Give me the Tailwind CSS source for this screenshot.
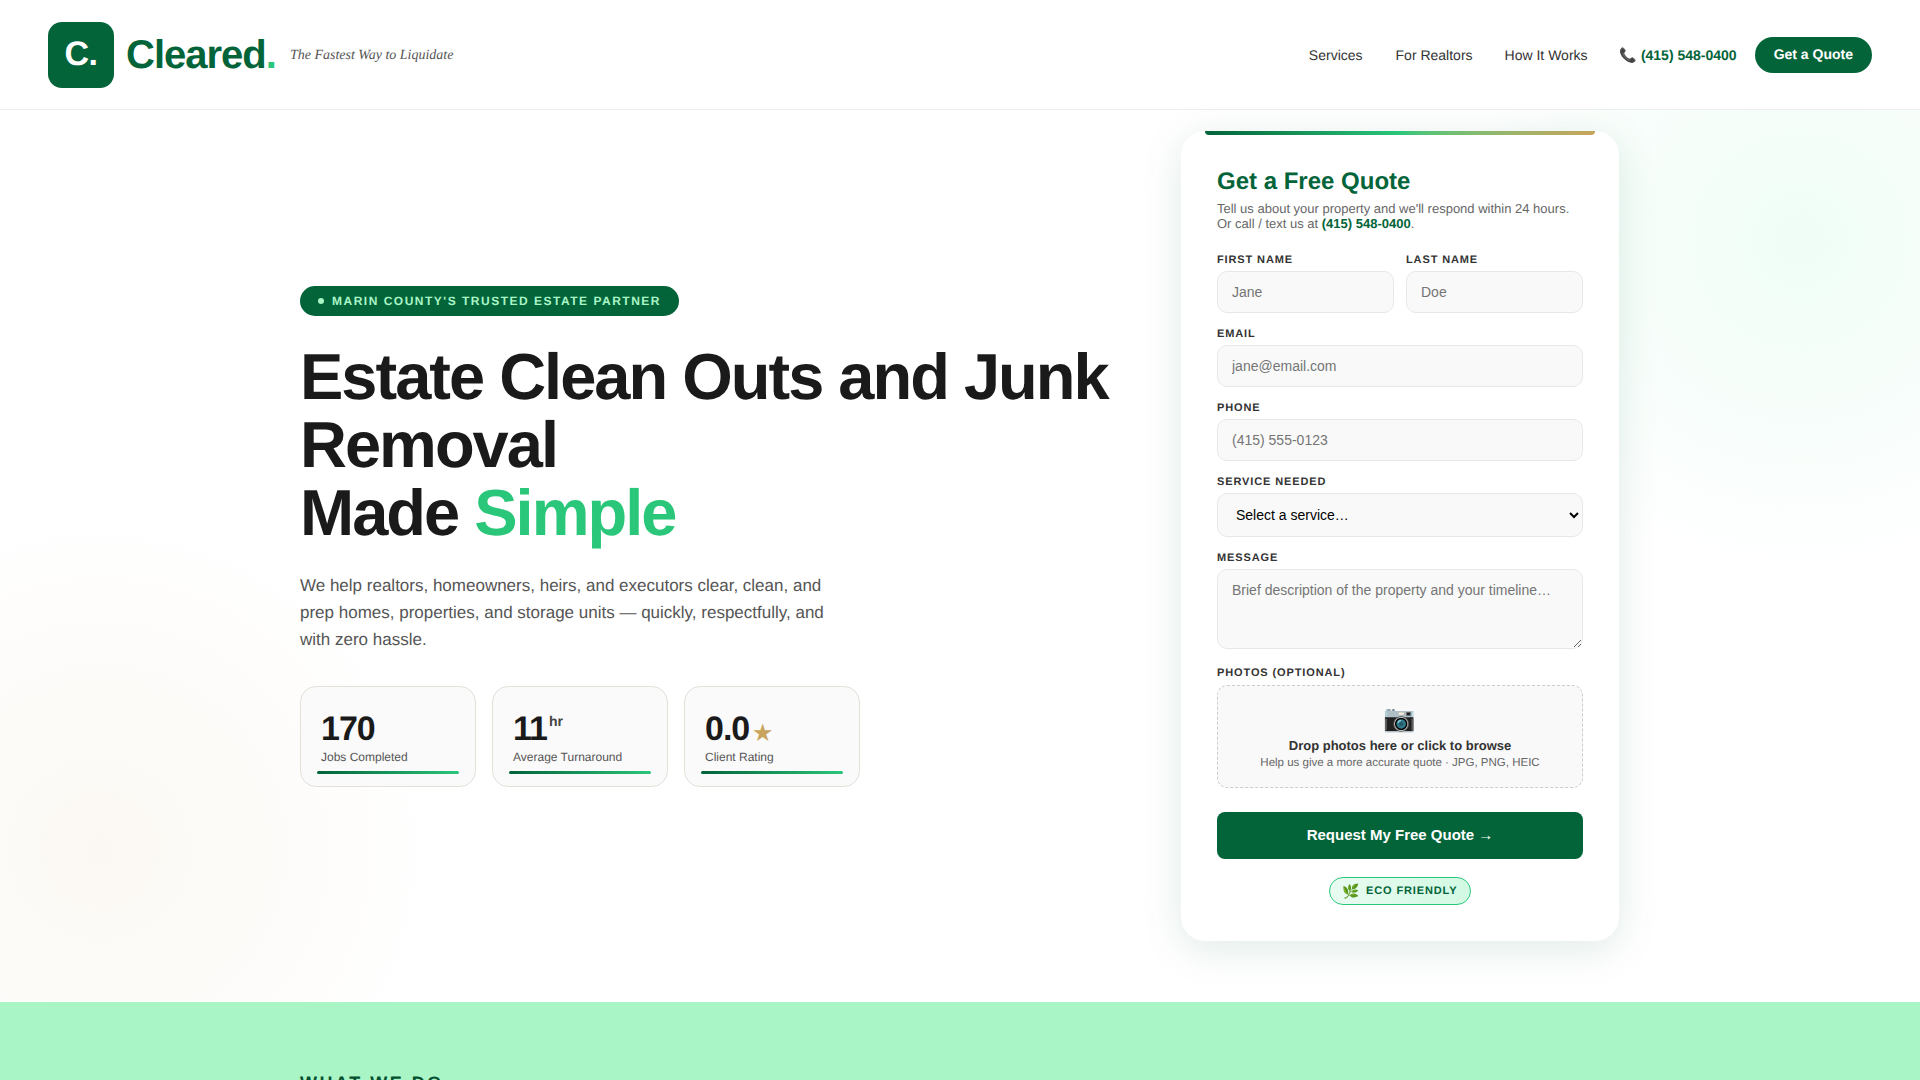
<!DOCTYPE html>
<html lang="en">
<head>
    <meta charset="UTF-8">
    <meta name="viewport" content="width=device-width, initial-scale=1.0">
    <title>Cleared. - Estate Clean Outs and Junk Removal</title>
    <script src="https://cdn.jsdelivr.net/npm/@tailwindcss/browser@4"></script>
</head>
<body class="bg-white font-['Liberation_Sans',Arial,sans-serif] text-[#1a1a1a] [text-rendering:geometricPrecision]">

    <!-- Header -->
    <header class="h-[110px] bg-white border-b border-[#eeeeee] px-12 flex items-center justify-between">
        <a href="#" class="flex items-center gap-3">
            <span class="w-[66px] h-[66px] rounded-[14px] bg-[#03643a] text-white text-[34px] font-bold tracking-[-0.5px] flex items-center justify-center">C.</span>
            <span class="text-[40px] font-bold tracking-[-1px] text-[#03643a]">Cleared<span class="text-[#2ac77b]">.</span></span>
            <span class="ml-[2px] mt-[2px] font-['Liberation_Serif',serif] italic text-[14px] text-[#555555]">The Fastest Way to Liquidate</span>
        </a>
        <nav class="flex items-center text-[14px] text-[#333333]">
            <a href="#" class="mr-[33px] mt-[2px]">Services</a>
            <a href="#" class="mr-8 mt-[2px]">For Realtors</a>
            <a href="#" class="mr-8 mt-[2px]">How It Works</a>
            <a href="#" class="mr-[18px] mt-[2px] font-bold text-[#03643a]"><span class="font-normal">📞</span> (415) 548-0400</a>
            <a href="#" class="h-9 px-[19px] rounded-full bg-[#03643a] text-white font-bold flex items-center">Get a Quote</a>
        </nav>
    </header>

    <!-- Hero -->
    <section class="pt-[21px] pb-[61px] bg-[radial-gradient(circle_340px_at_1800px_130px,#effdf6,#ffffff00),radial-gradient(circle_340px_at_100px_740px,#fbf8f3,#ffffff00)]">
        <div class="ml-[300px] w-[1319px] grid grid-cols-[1fr_438px] items-center gap-10">

            <!-- Left column -->
            <div>
                <div class="inline-flex items-center gap-2 h-[30px] px-[18px] rounded-full bg-[#03643a] text-[#a9f5c6] text-[12px] font-bold tracking-[1.5px] uppercase">
                    <span class="w-1.5 h-1.5 rounded-full bg-[#a9f5c6]"></span>
                    Marin County's Trusted Estate Partner
                </div>
                <h1 class="mt-[27px] text-[65px] leading-[68px] font-bold tracking-[-2px] text-[#1a1a1a]">
                    Estate Clean Outs and Junk Removal<br>Made <span class="text-[#2ac77b]">Simple</span>
                </h1>
                <p class="mt-[25px] w-[540px] text-[17px] leading-[27px] text-[#555555]">
                    We help realtors, homeowners, heirs, and executors clear, clean, and prep homes, properties, and storage units — quickly, respectfully, and with zero hassle.
                </p>
                <div class="mt-[33px] flex gap-4">
                    <div class="relative w-[176px] h-[101px] rounded-[16px] border border-[#e5e0d8] bg-[#fafafa] pt-[22px] pl-5">
                        <div class="text-[34px] leading-[40px] font-bold tracking-[-1px]">170</div>
                        <div class="text-[12px] leading-[14px] mt-[1px] text-[#555555]">Jobs Completed</div>
                        <div class="absolute left-4 right-4 bottom-[12px] h-[3px] rounded-full bg-gradient-to-r from-[#03643a] to-[#2ac77b]"></div>
                    </div>
                    <div class="relative w-[176px] h-[101px] rounded-[16px] border border-[#e5e0d8] bg-[#fafafa] pt-[22px] pl-5">
                        <div class="text-[34px] leading-[40px] font-bold tracking-[-1px]">11<sup class="text-[14px] tracking-normal text-[#444444] ml-[2px] top-[-14px]">hr</sup></div>
                        <div class="text-[12px] leading-[14px] mt-[1px] text-[#555555]">Average Turnaround</div>
                        <div class="absolute left-4 right-4 bottom-[12px] h-[3px] rounded-full bg-gradient-to-r from-[#03643a] to-[#2ac77b]"></div>
                    </div>
                    <div class="relative w-[176px] h-[101px] rounded-[16px] border border-[#e5e0d8] bg-[#fafafa] pt-[22px] pl-5">
                        <div class="text-[34px] leading-[40px] font-bold tracking-[-1px]">0.0<span class="text-[21px] leading-[0] tracking-normal text-[#c8a45c] ml-[4px]">★</span></div>
                        <div class="text-[12px] leading-[14px] mt-[1px] text-[#555555]">Client Rating</div>
                        <div class="absolute left-4 right-4 bottom-[12px] h-[3px] rounded-full bg-gradient-to-r from-[#03643a] to-[#2ac77b]"></div>
                    </div>
                </div>
            </div>

            <!-- Quote card -->
            <div class="relative h-[810px] rounded-[24px] bg-white px-9 pt-[36px] shadow-[0_8px_40px_rgba(3,100,58,0.13)]">
                <div class="absolute top-0 left-6 right-6 h-1 rounded-b-[4px] bg-gradient-to-r from-[#03643a] via-[#2ac77b] to-[#c8a45c]"></div>
                <h2 class="text-[24px] leading-[30px] font-bold text-[#03643a]">Get a Free Quote</h2>
                <p class="mt-[4px] text-[13px] leading-[15px] text-[#666666]">
                    Tell us about your property and we'll respond within 24 hours.<br>Or call / text us at <strong class="text-[#03643a]">(415) 548-0400</strong>.
                </p>

                <form class="mt-[23px]">
                    <div class="grid grid-cols-2 gap-3">
                        <div>
                            <label class="block text-[11px] leading-[13px] mb-[4px] font-bold tracking-[0.08em] uppercase text-[#333333]">First Name</label>
                            <input type="text" placeholder="Jane" class="w-full h-[42px] px-[14px] rounded-[10px] border-[1.5px] border-[#e8e8e8] bg-[#f9f9f9] text-[14px] placeholder:text-[#757575]">
                        </div>
                        <div>
                            <label class="block text-[11px] leading-[13px] mb-[4px] font-bold tracking-[0.08em] uppercase text-[#333333]">Last Name</label>
                            <input type="text" placeholder="Doe" class="w-full h-[42px] px-[14px] rounded-[10px] border-[1.5px] border-[#e8e8e8] bg-[#f9f9f9] text-[14px] placeholder:text-[#757575]">
                        </div>
                    </div>
                    <div class="mt-[15px]">
                        <label class="block text-[11px] leading-[13px] mb-[4px] font-bold tracking-[0.08em] uppercase text-[#333333]">Email</label>
                        <input type="email" placeholder="jane@email.com" class="w-full h-[42px] px-[14px] rounded-[10px] border-[1.5px] border-[#e8e8e8] bg-[#f9f9f9] text-[14px] placeholder:text-[#757575]">
                    </div>
                    <div class="mt-[15px]">
                        <label class="block text-[11px] leading-[13px] mb-[4px] font-bold tracking-[0.08em] uppercase text-[#333333]">Phone</label>
                        <input type="tel" placeholder="(415) 555-0123" class="w-full h-[42px] px-[14px] rounded-[10px] border-[1.5px] border-[#e8e8e8] bg-[#f9f9f9] text-[14px] placeholder:text-[#757575]">
                    </div>
                    <div class="mt-[15px]">
                        <label class="block text-[11px] leading-[13px] mb-[4px] font-bold tracking-[0.08em] uppercase text-[#333333]">Service Needed</label>
                        <select class="w-full h-[44px] px-[14px] rounded-[10px] border-[1.5px] border-[#e8e8e8] bg-[#f9f9f9] text-[14px] text-black">
                            <option>Select a service…</option>
                        </select>
                    </div>
                    <div class="mt-[15px]">
                        <label class="block text-[11px] leading-[13px] mb-[4px] font-bold tracking-[0.08em] uppercase text-[#333333]">Message</label>
                        <textarea placeholder="Brief description of the property and your timeline…" class="block w-full h-[80px] px-[14px] py-[12px] rounded-[10px] border-[1.5px] border-[#e8e8e8] bg-[#f9f9f9] text-[14px] leading-[16px] resize-y placeholder:text-[#757575]"></textarea>
                    </div>
                    <div class="mt-[18px]">
                        <label class="block text-[11px] leading-[13px] mb-[5px] font-bold tracking-[0.08em] uppercase text-[#333333]">Photos (optional)</label>
                        <div class="h-[103px] rounded-[10px] border-[1.5px] border-dashed border-[#cccccc] bg-[#f9f9f9] flex flex-col items-center pt-[17px]">
                            <span class="text-[26px] leading-[30px]">📷</span>
                            <span class="mt-[5px] text-[13px] leading-[15px] font-bold text-[#333333]">Drop photos here or click to browse</span>
                            <span class="mt-[3px] text-[11.5px] leading-[14px] text-[#666666]">Help us give a more accurate quote · JPG, PNG, HEIC</span>
                        </div>
                    </div>
                    <button type="button" class="mt-6 w-full h-[47px] rounded-[8px] bg-[#03643a] text-white text-[15px] font-bold">Request My Free Quote →</button>
                    <div class="mt-[18px] flex justify-center">
                        <span class="h-7 px-[13px] pt-[1px] rounded-full border border-[#2ac77b] bg-gradient-to-r from-[#e9fbf1] to-[#d2f9e3] text-[11px] font-bold tracking-[0.08em] uppercase text-[#03643a] flex items-center gap-[6px]"><span class="text-[14px] tracking-normal">🌿</span>Eco Friendly</span>
                    </div>
                </form>
            </div>
        </div>
    </section>

    <!-- Services -->
    <section class="bg-[#a9f5c6] pt-[70px] pb-20">
        <div class="ml-[300px] w-[1319px]">
            <p class="text-[18px] leading-[22px] font-bold tracking-[0.14em] uppercase text-[#03502f]">What We Do</p>
        </div>
    </section>
</body>
</html>
